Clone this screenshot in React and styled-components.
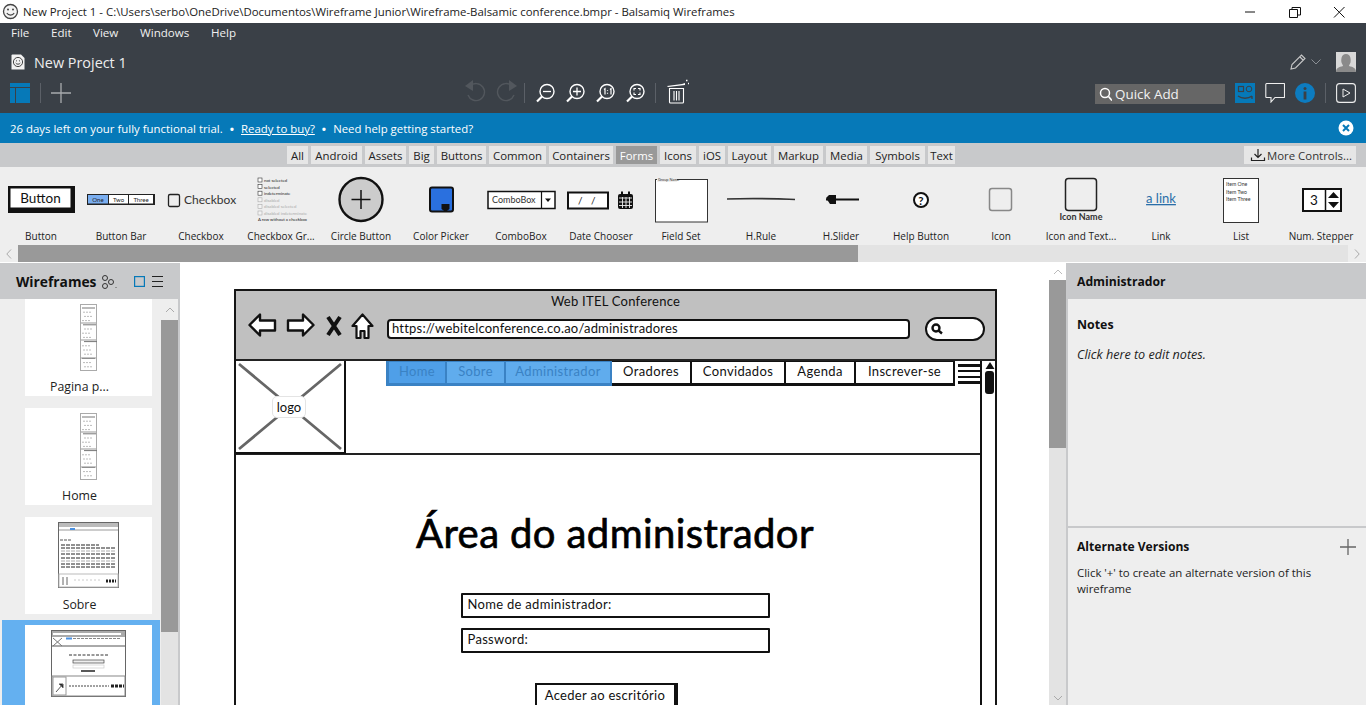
import React from 'react';
import styled, { createGlobalStyle } from 'styled-components';

const Global = createGlobalStyle`
  html, body { margin: 0; padding: 0; height: 705px; overflow: hidden; background: #fff; }
  body { font-family: "Open Sans", "Noto Sans", "Liberation Sans", sans-serif; font-size: 12px; color: #111; }
  * { box-sizing: border-box; }
`;
const sketch = `"Lato", "Inter", "Liberation Sans", sans-serif`;

const Page = styled.div`width:1366px;height:705px;display:flex;flex-direction:column;overflow:hidden;`;
const TitleBar = styled.div`height:23px;display:flex;align-items:center;padding-left:2px;background:#fff;flex:none;`;
const TitleText = styled.span`margin-left:4px;font-size:11.4px;color:#222;white-space:nowrap;`;
const WinControls = styled.div`margin-left:auto;display:flex;align-items:center;gap:29px;padding-right:18px;`;
const Dark = styled.div`background:#3a4047;color:#fff;height:90px;flex:none;display:flex;flex-direction:column;`;
const Menu = styled.div`height:19px;display:flex;align-items:center;padding-left:11px;font-size:11.6px;color:#f0f0f0;`;
const MenuItem = styled.span`width:${p=>p.$w}px;`;
const ProjectRow = styled.div`height:30px;display:flex;align-items:center;padding:0 10px 0 11px;margin-top:5px;`;
const ProjectName = styled.span`margin-left:9px;font-size:14.4px;color:#eee;`;
const RowRight = styled.div`margin-left:auto;display:flex;align-items:center;`;
const Avatar = styled.div`width:20px;height:20px;margin-left:15px;background:#d8d8d8;overflow:hidden;`;
const Toolbar = styled.div`height:20px;margin-top:6px;display:flex;align-items:center;padding:0 10px;`;
const Sep = styled.div`width:1px;height:20px;background:#5b6067;margin:0 ${p=>p.$r ?? 10}px 0 ${p=>p.$l ?? 10}px;`;
const ToolGroup = styled.div`display:flex;align-items:center;gap:${p=>p.$gap ?? 10}px;margin-left:${p=>p.$ml ?? 0}px;`;
const QuickAdd = styled.div`margin-left:auto;margin-top:2px;width:130px;height:20px;background:#666;display:flex;align-items:center;padding-left:4px;gap:3px;font-size:13.4px;color:#f2f2f2;margin-right:10px;`;
const Banner = styled.div`height:30px;flex:none;background:#0679b8;color:#fff;display:flex;align-items:center;padding:0 12px 0 10px;font-size:11.4px;`;
const BannerDot = styled.span`margin:0 7px;font-weight:700;`;
const BannerLink = styled.span`text-decoration:underline;`;
const TabsBar = styled.div`height:24px;flex:none;background:#c8c9cb;display:flex;align-items:center;padding-left:287px;`;
const Tab = styled.div`width:${p=>p.$w}px;height:18px;margin-right:3px;background:${p=>p.$on?'#999':'#e6e6e6'};color:${p=>p.$on?'#fff':'#222'};font-size:11.4px;display:flex;align-items:center;justify-content:center;white-space:nowrap;`;
const MoreBtn = styled.div`margin-left:auto;margin-right:10px;width:112px;height:18px;background:#e6e6e6;display:flex;align-items:center;gap:1px;padding-left:6px;font-size:11.4px;color:#333;white-space:nowrap;`;
const Palette = styled.div`height:78px;flex:none;background:#eee;display:grid;grid-template-columns:repeat(17,80px);padding-left:1px;`;
const Cell = styled.div`display:flex;flex-direction:column;align-items:center;`;
const CellLabel = styled.div`margin-top:1px;font-size:10px;line-height:14px;color:#222;white-space:nowrap;`;
const HScroll = styled.div`height:17px;flex:none;background:#e3e3e3;display:flex;align-items:center;`;
const HThumb = styled.div`width:840px;height:17px;background:#999;`;
const ArrowCell = styled.div`width:18px;height:17px;display:flex;align-items:center;justify-content:center;background:#eee;`;
const Main = styled.div`flex:1;display:flex;min-height:0;margin-top:1px;`;
const LeftPanel = styled.div`width:180px;flex:none;background:#eee;border-right:2px solid #c8c9cb;display:flex;flex-direction:column;`;
const PanelHead = styled.div`height:36px;flex:none;background:#c8c9cb;display:flex;align-items:center;padding:${p=>p.$pt ?? 0}px 0 0 ${p=>p.$pl}px;font-size:${p=>p.$fs}px;font-weight:700;color:#111;`;
const HeadIcons = styled.div`display:flex;align-items:center;`;
const ListWrap = styled.div`flex:1;display:flex;min-height:0;`;
const List = styled.div`width:161px;flex:none;overflow:hidden;`;
const Row = styled.div`padding:${p=>p.$sel?'5px 0 0 23px':'0 0 0 25px'};padding-bottom:${p=>p.$pb}px;background:${p=>p.$sel?'#64b0f0':'transparent'};margin-left:${p=>p.$sel?2:0}px;margin-right:${p=>p.$sel?1:0}px;height:${p=>p.$sel?'85px':'auto'};`;
const Card = styled.div`width:127px;height:97px;background:#fff;padding-top:5px;display:flex;flex-direction:column;align-items:center;`;
const CardImg = styled.div`height:67px;display:flex;justify-content:center;align-items:flex-start;`;
const CardName = styled.div`margin-top:7px;width:109px;margin-right:18px;text-align:center;font-size:12.3px;line-height:18px;color:#222;`;
const VScroll = styled.div`width:${p=>p.$w??17}px;flex:none;background:#e3e3e3;display:flex;flex-direction:column;position:relative;`;
const VBtn = styled.div`height:${p=>p.$h}px;flex:none;background:${p=>p.$bg||'#eee'};display:flex;align-items:center;justify-content:center;`;
const VThumb = styled.div`height:${p=>p.$h}px;flex:none;background:#999;`;
const VEnd = styled.div`margin-top:auto;height:15px;display:flex;align-items:center;justify-content:center;`;
const Canvas = styled.div`flex:1;min-width:0;background:#fff;overflow:hidden;padding:26px 0 0 54px;`;
const Frame = styled.div`width:763px;height:460px;border:2.5px solid #151515;border-bottom:none;border-radius:1px;background:#fff;`;
const Chrome = styled.div`height:70px;background:#c0c0c0;border-bottom:2px solid #222;display:flex;flex-direction:column;`;
const ChromeTitle = styled.div`height:20px;text-align:center;font-family:${sketch};font-size:13px;line-height:20px;color:#111;letter-spacing:.25px;`;
const ChromeNav = styled.div`display:flex;align-items:center;padding-left:12px;height:28px;margin-top:4px;`;
const UrlBox = styled.div`margin-left:13px;width:523px;height:20px;background:#fff;border:2.5px solid #111;border-radius:4px;padding-left:3px;font-family:${sketch};font-size:13px;line-height:15px;color:#111;letter-spacing:.2px;white-space:nowrap;`;
const SearchBox = styled.div`margin-left:15px;width:60px;height:24px;background:#fff;border:2.5px solid #111;border-radius:12px;display:flex;align-items:center;padding-left:3px;`;
const Body = styled.div`display:flex;height:100%;`;
const Content = styled.div`width:746px;flex:none;border-right:2.5px solid #111;display:flex;flex-direction:column;align-items:center;`;
const SiteHead = styled.div`width:100%;height:94px;flex:none;border-bottom:2px solid #222;display:flex;align-items:flex-start;`;
const LogoBox = styled.div`width:110px;height:93px;flex:none;border-right:2.5px solid #111;border-bottom:2px solid #111;position:relative;`;
const LogoPill = styled.div`position:absolute;left:36px;top:35px;width:34px;height:22px;background:#fff;border:1px solid #e4e4e4;border-radius:5px;display:flex;align-items:center;justify-content:center;font-family:${sketch};font-size:13px;color:#111;`;
const Nav = styled.div`margin-left:40px;height:25px;display:flex;`;
const NavItem = styled.div`width:${p=>p.$w}px;display:flex;align-items:center;justify-content:center;padding-bottom:3px;font-family:${sketch};font-size:13px;letter-spacing:.35px;white-space:nowrap;
  background:${p=>p.$bg||'#fff'};color:${p=>p.$bg?'#3a82c4':'#111'};
  border-right:2px solid ${p=>p.$bg?'#3a82c4':'#111'};border-bottom:3px solid ${p=>p.$bg?'#3a82c4':'#111'};border-top:1px solid ${p=>p.$bg?'#3a82c4':'#111'};
  ${p=>p.$first?`border-left:3px solid #3a82c4;`:''}`;
const Burger = styled.div`margin-left:3px;margin-top:3px;width:22px;height:20px;display:flex;flex-direction:column;justify-content:space-between;`;
const BurgerLine = styled.div`height:2.5px;background:#111;`;
const Heading = styled.h1`margin:54px 0 0 14px;font-family:${sketch};font-weight:400;font-size:40px;line-height:48px;color:#000;letter-spacing:.4px;white-space:nowrap;-webkit-text-stroke:.7px #000;`;
const Field = styled.div`width:309px;height:25px;margin:${p=>p.$mt}px 0 0 14px;border:2.5px solid #111;border-radius:1px;padding-left:5px;font-family:${sketch};font-size:13px;line-height:19px;color:#111;letter-spacing:.3px;`;
const Submit = styled.div`width:143px;height:30px;margin:30px 0 0 -4px;background:#fff;border:2px solid #111;border-right-width:4px;padding-top:2px;text-align:center;font-family:${sketch};font-size:13px;line-height:17px;color:#111;letter-spacing:.3px;white-space:nowrap;`;
const FrameScroll = styled.div`width:15px;flex:none;display:flex;flex-direction:column;align-items:center;`;
const FrameThumb = styled.div`width:9px;height:23px;margin-top:1px;background:#111;border-radius:3px;`;
const RightPanel = styled.div`flex:none;width:300px;background:#eee;border-left:2px solid #c8c9cb;display:flex;flex-direction:column;`;
const Notes = styled.div`height:229px;flex:none;padding:17px 9px 0;border-bottom:2px solid #c8c9cb;`;
const SubTitle = styled.div`font-size:${p=>p.$fs}px;font-weight:700;line-height:18px;color:#111;display:flex;align-items:center;justify-content:space-between;`;
const Italic = styled.div`margin-top:12px;font-size:12.6px;font-style:italic;line-height:18px;color:#222;`;
const Alt = styled.div`padding:10px 10px 0 9px;`;
const AltText = styled.div`margin-top:9px;font-size:11.4px;line-height:16px;color:#222;width:250px;`;

const I = ({w=20,h=20,children,style}) => <svg width={w} height={h} viewBox={`0 0 ${w} ${h}`} fill="none" style={{display:'block',flex:'none',...style}}>{children}</svg>;

const Zoom = ({children}) => <I><circle cx="12" cy="8.5" r="7" stroke="#fff" strokeWidth="1.4"/><path d="M7 13.5 2 18.5" stroke="#fff" strokeWidth="2.2"/>{children}</I>;

const tabs = [['All',21],['Android',51],['Assets',41],['Big',25],['Buttons',49],['Common',57],['Containers',64],['Forms',41,1],['Icons',36],['iOS',26],['Layout',43],['Markup',49],['Media',41],['Symbols',55],['Text',27]];

const PV = ({children}) => <svg width="80" height="61" viewBox="0 0 80 61" style={{display:'block',overflow:'visible'}} fontFamily={sketch}>{children}</svg>;

const previews = [
  ['Button', <PV><rect x="7" y="19" width="67" height="27" fill="#111"/><rect x="9.5" y="21.5" width="60" height="19" fill="#fff"/><text x="39.5" y="36" textAnchor="middle" fontSize="13.5" fill="#111">Button</text></PV>],
  ['Button Bar', <PV><rect x="6" y="27" width="68" height="11" fill="#222"/><rect x="7" y="28" width="20" height="8.5" fill="#7aaef0"/><rect x="28" y="28" width="19" height="8.5" fill="#fff"/><rect x="48" y="28" width="24" height="8.5" fill="#fff"/><g fontSize="6" textAnchor="middle" fill="#222"><text x="17" y="34.5">One</text><text x="37.5" y="34.5">Two</text><text x="60" y="34.5">Three</text></g></PV>],
  ['Checkbox', <PV><rect x="7.5" y="27.5" width="11" height="12" rx="1.5" fill="#eee" stroke="#222" strokeWidth="1.3"/><text x="23" y="37" fontSize="12" fill="#333">Checkbox</text></PV>],
  ['Checkbox Gr...', <PV>{['not selected','selected','indeterminate','disabled','disabled selected','disabled indeterminate'].map((t,i)=><g key={t} opacity={i>2?.35:1}><rect x="17" y={11+i*6.6} width="4" height="4" fill="#fff" stroke="#333" strokeWidth=".6"/><text x="23" y={15+i*6.6} fontSize="4.3" fill="#222">{t}</text></g>)}<text x="17" y="53.5" fontSize="4.3" fill="#222">A row without a checkbox</text></PV>],
  ['Circle Button', <PV><circle cx="40" cy="32.5" r="21.5" fill="#ccc" stroke="#111" strokeWidth="2.4"/><path d="M30.5 32.5h19M40 23v19" stroke="#111" strokeWidth="1.5"/></PV>],
  ['Color Picker', <PV><rect x="29" y="20.5" width="23" height="24" rx="2" fill="#2a70df" stroke="#111" strokeWidth="2"/><path d="M40.500 37h8v5l-4 3-4-3z" fill="#111"/></PV>],
  ['ComboBox', <PV><rect x="7" y="24.500" width="67" height="17" fill="#fff" stroke="#111" strokeWidth="1.5"/><path d="M60.500 24.500v17" stroke="#111" strokeWidth="1.2"/><path d="M64 31.500h6l-3 3.500z" fill="#111"/><text x="11" y="36" fontSize="9" fill="#333">ComboBox</text></PV>],
  ['Date Chooser', <PV><rect x="7" y="25.500" width="40" height="16" fill="#fff" stroke="#111" strokeWidth="2"/><text x="17" y="37" fontSize="10" fill="#222" letterSpacing="3">/ /</text><rect x="57" y="27" width="15" height="15" rx="2" fill="#111"/><path d="M61 24.500v3M68 24.500v3" stroke="#111" strokeWidth="2"/><path d="M58 31h13M58 35h13M58 38.500h13M61.500 30v11M65 30v11M68.500 30v11" stroke="#eee" strokeWidth=".9"/></PV>],
  ['Field Set', <PV><rect x="14.500" y="12.500" width="52" height="42.500" fill="#fff" stroke="#333"/><rect x="16" y="10" width="20" height="5" fill="#eee"/><text x="17" y="14" fontSize="3.800" fill="#333">Group Name</text></PV>],
  ['H.Rule', <PV><path d="M6 32c20-1 45-.6 68 .5" stroke="#333" strokeWidth="1.5"/></PV>],
  ['H.Slider', <PV><path d="M25 32.500h33" stroke="#111" strokeWidth="2"/><path d="M25 31l3-3h7v9h-6z" fill="#111"/></PV>],
  ['Help Button', <PV><circle cx="40" cy="33" r="7" fill="#fff" stroke="#111" strokeWidth="2"/><text x="40" y="37.500" textAnchor="middle" fontSize="11.500" fontWeight="700" fill="#111">?</text></PV>],
  ['Icon', <PV><rect x="28.500" y="21.500" width="22" height="22" rx="2.500" fill="#eee" stroke="#888" strokeWidth="1.500"/></PV>],
  ['Icon and Text...', <PV><rect x="24.500" y="11.500" width="31" height="32" rx="3" fill="#eee" stroke="#222" strokeWidth="1.500"/><text x="40" y="53" textAnchor="middle" fontSize="9" fontWeight="700" fill="#333">Icon Name</text></PV>],
  ['Link', <PV><text x="40" y="36" textAnchor="middle" fontSize="13" fill="#2a6ea8" textDecoration="underline">a link</text></PV>],
  ['List', <PV><rect x="22.500" y="11.500" width="35" height="44" fill="#fff" stroke="#333"/><g fontSize="5.200" fill="#333"><text x="25" y="19">Item One</text><text x="25" y="26.500">Item Two</text><text x="25" y="34">Item Three</text></g></PV>],
  ['Num. Stepper', <PV><rect x="22" y="22" width="38" height="22" fill="#fff" stroke="#111" strokeWidth="2"/><path d="M44.500 22v22" stroke="#111" strokeWidth="1.500"/><text x="33" y="38" textAnchor="middle" fontSize="13.500" fill="#111">3</text><path d="M47 31l5.500-6 5.500 6zM47 35l5.500 6 5.500-6z" fill="#111"/></PV>],
];

const seq = (n, fn) => Array.from({length:n}, (_, i) => fn(i));

const NarrowThumb = () => <svg width="17" height="67" style={{display:'block'}}><rect x=".5" y=".5" width="16" height="66" fill="#fff" stroke="#aaa"/>{seq(15, i => <path key={i} d={`M${2+i%3} ${4+i*4.200}h${i%4===0?13:8}`} stroke={i%4===0?'#777':'#bbb'} strokeDasharray={i%4===0?'':'2 1'}/>)}<path d="M1 19h15M1 36h15M1 54h15" stroke="#999"/></svg>;
const SobreThumb = () => <svg width="61" height="66" style={{display:'block'}}><rect x=".5" y=".5" width="60" height="65" fill="#fff" stroke="#666"/><rect x="1" y="1" width="59" height="4" fill="#bbb"/><path d="M1 8h59" stroke="#999"/><path d="M12 7h5" stroke="#4a90e0" strokeWidth="2"/><path d="M2 18h12" stroke="#555" strokeDasharray="3 1"/>{[23,26,29,32,36,39,42,45].map((y,i)=><path key={y} d={`M3 ${y}h${i===0?38:54}`} stroke={i%3===2?'#aaa':'#222'} strokeDasharray="4 1"/>)}<rect x="1" y="52" width="59" height="13" fill="#fff" stroke="#bbb"/><path d="M5 55v8M9 55v8" stroke="#666"/><path d="M16 58h28" stroke="#ccc" strokeDasharray="2 2"/><path d="M48 59h10" stroke="#222" strokeWidth="3" strokeDasharray="2 1"/></svg>;
const AdminThumb = () => <svg width="75" height="67" style={{display:'block'}}><rect x=".5" y=".5" width="74" height="66" fill="#fff" stroke="#666"/><rect x="1" y="1" width="73" height="6" fill="#aaa"/><path d="M2 4h68" stroke="#fff" strokeWidth="2"/><path d="M15 8.500h6" stroke="#4a90e0" strokeWidth="2"/><path d="M22 8.500h48" stroke="#888" strokeDasharray="3 1"/><path d="M1 16h73" stroke="#555"/><path d="M2 8l9 8M11 8l-9 8" stroke="#777"/><path d="M18 25h39" stroke="#333" strokeDasharray="3 1.500"/><rect x="22" y="30" width="31" height="3" fill="#eee" stroke="#444" strokeWidth=".7"/><rect x="22" y="35" width="31" height="3" fill="#fff" stroke="#ccc" strokeWidth=".7"/><path d="M30 41h14" stroke="#222" strokeWidth="1.500"/><rect x="1" y="46" width="73" height="20" fill="#fff" stroke="#888"/><rect x="2" y="47" width="13" height="18" fill="#fff" stroke="#999"/><path d="M5 62l7-8M8 54h4v4" stroke="#555"/><path d="M18 56h40" stroke="#444" strokeDasharray="2 1"/><path d="M60 56h13" stroke="#222" strokeWidth="3" strokeDasharray="3 1"/></svg>;

export default function App() {
  return (
    <Page>
      <Global />
      <TitleBar>
        <I w={17} h={17}><circle cx="8.500" cy="8.500" r="7" stroke="#444" strokeWidth="1.300" fill="#f4f4f4"/><circle cx="6" cy="6.500" r="1" fill="#444"/><circle cx="11" cy="6.500" r="1" fill="#444"/><path d="M4.800 10c1.600 2.800 6 2.800 7.400 0" stroke="#444" strokeWidth="1.100"/></I>
        <TitleText>New Project 1 - C:\Users\serbo\OneDrive\Documentos\Wireframe Junior\Wireframe-Balsamic conference.bmpr - Balsamiq Wireframes</TitleText>
        <WinControls>
          <I w={16} h={12}><path d="M3 6h10" stroke="#111"/></I>
          <I w={16} h={12}><path d="M2.500 3.500h8v8h-8zM5 3V1.500h8.500V9H11" stroke="#111"/></I>
          <I w={16} h={12}><path d="M2 1l10.500 10.500M12.500 1 2 11.500" stroke="#111"/></I>
        </WinControls>
      </TitleBar>
      <Dark>
        <Menu>
          <MenuItem $w={40}>File</MenuItem><MenuItem $w={42}>Edit</MenuItem><MenuItem $w={47}>View</MenuItem><MenuItem $w={71}>Windows</MenuItem><MenuItem $w={40}>Help</MenuItem>
        </Menu>
        <ProjectRow>
          <I w={14} h={16}><path d="M.5 1.500Q.5.500 1.500.500H10l3.500 3.500V15.500H.5z" fill="#f2f2f2"/><circle cx="7" cy="8" r="4.600" stroke="#444" strokeWidth="1"/><path d="M4.700 9c1 1.600 3.600 1.600 4.600 0" stroke="#444"/><circle cx="5.500" cy="6.800" r=".6" fill="#444"/><circle cx="8.500" cy="6.800" r=".6" fill="#444"/></I>
          <ProjectName>New Project 1</ProjectName>
          <RowRight>
            <I w={16} h={16}><path d="M1 15l1-4.500L11.500 1l3.500 3.500L5.500 14z M10 3l3.500 3.500" stroke="#c8c8c8" strokeWidth="1.100"/></I>
            <I w={10} h={6} style={{marginLeft:5}}><path d="M.5.500 5 5 9.500.5" stroke="#8a8f95"/></I>
            <Avatar><I><path d="M0 20c0-4 3-5 7-6 0-1-1-2-1.500-3.500C5 8 5 2 10 2s5 6 4.500 8.500C14 12 13 13 13 14c4 1 7 2 7 6z" fill="#8a8a8a"/></I></Avatar>
          </RowRight>
        </ProjectRow>
        <Toolbar>
          <I><path d="M0 0h20v20H0z" fill="#0679b8"/><path d="M0 4.500h20M5.500 4.500V20" stroke="#3a4047"/></I>
          <Sep />
          <I><path d="M0 10h20M10 0v20" stroke="#a8abae" strokeWidth="1.300"/></I>
          <ToolGroup $ml={393} $gap={10}>
            <I w={22} h={24} style={{marginTop:-2}}><path d="M6 6a8.500 8.500 0 1 1-2 9" stroke="#52575d" strokeWidth="1.400"/><path d="M1 6l8-6v11z" fill="#52575d"/></I>
            <I w={22} h={24} style={{marginTop:-2}}><path d="M16 6a8.500 8.500 0 1 0 2 9" stroke="#52575d" strokeWidth="1.400"/><path d="M21 6l-8-6v11z" fill="#52575d"/></I>
          </ToolGroup>
          <Sep $l={6} $r={10} />
          <ToolGroup>
            <Zoom><path d="M8 8.500h8" stroke="#fff" strokeWidth="1.300"/></Zoom>
            <Zoom><path d="M8 8.500h8M12 4.500v8" stroke="#fff" strokeWidth="1.300"/></Zoom>
            <Zoom><path d="M9 6.500l1-.8v5.800M15 6.500l1-.8v5.800M12.500 7.200v.9M12.500 9.800v.9" stroke="#fff" strokeWidth="1.200"/></Zoom>
            <Zoom><path d="M9 7.500V5.500h2M13 5.500h2v2M15 9.500v2h-2M11 11.500H9v-2" stroke="#fff" strokeWidth="1.100"/></Zoom>
          </ToolGroup>
          <Sep $l={10} $r={10} />
          <I w={24} h={26} style={{marginTop:-5}}><path d="M1 8l15-2 3-1v2l-17 2z" fill="#fff"/><path d="M20 2.500h1.500M22 5.500h1" stroke="#fff" strokeWidth="1.500"/><path d="M3.500 10.500h14V24a1 1 0 0 1-1 1h-12a1 1 0 0 1-1-1zM8 13v9.500M10.500 13v9.500M13 13v9.500" stroke="#fff" strokeWidth="1.100"/></I>
          <QuickAdd>
            <I w={13} h={14}><circle cx="6" cy="6" r="4.500" stroke="#fff" strokeWidth="1.500"/><path d="M9.500 9.500l3.500 4" stroke="#fff" strokeWidth="1.700"/></I>
            Quick Add
          </QuickAdd>
          <ToolGroup>
            <I><path d="M0 0h20v20H0z" fill="#0679b8"/><rect x="3.500" y="3.500" width="5" height="5" stroke="#3a4047" strokeWidth="1.200"/><circle cx="14" cy="6" r="2.800" stroke="#3a4047"/><path d="M3 13c4 3 10 3 14 0M17 13v3" stroke="#3a4047" strokeWidth="1.300"/></I>
            <I><path d="M.8 1.500a1 1 0 0 1 1-1H19a.5.500 0 0 1 .5.500v13a.5.500 0 0 1-.5.500H10L6 19v-4.500H1.500a.7.700 0 0 1-.7-.7z" stroke="#eee" strokeWidth="1.100"/></I>
            <I><circle cx="10" cy="10" r="10" fill="#0d7cc0"/><circle cx="10" cy="5.500" r="1.500" fill="#3a4047"/><path d="M10 8.500v8" stroke="#3a4047" strokeWidth="2.800"/></I>
          </ToolGroup>
          <Sep $l={10} $r={10} />
          <I><rect x=".6" y=".6" width="18.800" height="18.800" rx="3" stroke="#eee" strokeWidth="1.100"/><path d="M7 6l7 4-7 4z" stroke="#eee"/></I>
        </Toolbar>
      </Dark>
      <Banner>
        26 days left on your fully functional trial.<BannerDot>•</BannerDot><BannerLink>Ready to buy?</BannerLink><BannerDot>•</BannerDot>Need help getting started?
        <RowRight>
          <I w={16} h={16}><circle cx="8" cy="8" r="7.500" fill="#fff"/><path d="M5 5l6 6M11 5l-6 6" stroke="#0679b8" strokeWidth="2"/></I>
        </RowRight>
      </Banner>
      <TabsBar>
        {tabs.map(([t,w,on]) => <Tab key={t} $w={w} $on={on}>{t}</Tab>)}
        <MoreBtn>
          <I w={16} h={14}><path d="M8 1v8M4.500 6 8 9.500 11.500 6M1.500 9.500v3h13v-3" stroke="#222" strokeWidth="1.200"/></I>
          More Controls...
        </MoreBtn>
      </TabsBar>
      <Palette>
        {previews.map(([name, node]) => <Cell key={name}>{node}<CellLabel>{name}</CellLabel></Cell>)}
      </Palette>
      <HScroll>
        <ArrowCell><I w={6} h={10}><path d="M5 .5.800 5 5 9.500" stroke="#aaa"/></I></ArrowCell>
        <HThumb />
        <RowRight><ArrowCell><I w={6} h={10}><path d="M1 .5 5.200 5 1 9.500" stroke="#aaa"/></I></ArrowCell></RowRight>
      </HScroll>
      <Main>
        <LeftPanel>
          <PanelHead $pl={16} $pt={1} $fs={13.8}>
            Wireframes
            <HeadIcons>
              <I w={17} h={14} style={{marginLeft:5}}><circle cx="4" cy="3" r="2.500" stroke="#333"/><circle cx="4" cy="11" r="2.500" stroke="#333"/><circle cx="10" cy="7" r="2.500" stroke="#333"/><path d="M14 12l1 1 1-1" stroke="#777" strokeWidth=".7"/></I>
              <I w={11} h={11} style={{marginLeft:16}}><rect x=".6" y=".6" width="9.800" height="9.800" stroke="#0679b8" strokeWidth="1.200"/></I>
              <I w={11} h={11} style={{marginLeft:7}}><path d="M0 .5h11M0 5.500h11M0 10.500h11" stroke="#222"/></I>
            </HeadIcons>
          </PanelHead>
          <ListWrap>
            <List>
              <Row $pb={12}><Card><CardImg><NarrowThumb /></CardImg><CardName>Pagina p...</CardName></Card></Row>
              <Row $pb={12}><Card><CardImg><NarrowThumb /></CardImg><CardName>Home</CardName></Card></Row>
              <Row $pb={6}><Card><CardImg><SobreThumb /></CardImg><CardName>Sobre</CardName></Card></Row>
              <Row $sel $pb={0}><Card><CardImg><AdminThumb /></CardImg></Card></Row>
            </List>
            <VScroll>
              <VBtn $h={21}><I w={10} h={6}><path d="M1 5 5 1l4 4" stroke="#aaa"/></I></VBtn>
              <VThumb $h={312} />
            </VScroll>
          </ListWrap>
        </LeftPanel>
        <Canvas>
          <Frame>
            <Chrome>
              <ChromeTitle>Web ITEL Conference</ChromeTitle>
              <ChromeNav>
                <I w={29} h={26} style={{marginTop:-6}}><path d="M1.500 13 12 2.500v6h15v10H12v5z" transform="translate(0 -1)" fill="#fff" stroke="#111" strokeWidth="2.400" strokeLinejoin="round"/></I>
                <I w={29} h={26} style={{marginLeft:9,marginTop:-6}}><path d="M27.500 13 17 2.500v6H2v10h15v5z" transform="translate(0 -1)" fill="#fff" stroke="#111" strokeWidth="2.400" strokeLinejoin="round"/></I>
                <I w={16} h={22} style={{marginLeft:11,marginTop:-6}}><path d="M2 2l12 18M14 2 2 20" stroke="#111" strokeWidth="4"/></I>
                <I w={23} h={27} style={{marginLeft:9,marginTop:-6}}><path d="M11.500 1.500 1.500 13h4v12h4v-7h4v7h4V13h4z" fill="#fff" stroke="#111" strokeWidth="2.200" strokeLinejoin="round"/></I>
                <UrlBox>https://webitelconference.co.ao/administradores</UrlBox>
                <SearchBox><I w={14} h={14}><circle cx="6" cy="6" r="3.500" stroke="#111" strokeWidth="2.400"/><path d="M8.500 8.500l3.500 3" stroke="#111" strokeWidth="2.400"/></I></SearchBox>
              </ChromeNav>
            </Chrome>
            <Body>
              <Content>
                <SiteHead>
                  <LogoBox>
                    <svg width="108" height="91" style={{display:'block'}}><path d="M3 3l102 85M105 3 3 88" stroke="#666" strokeWidth="2.800"/></svg>
                    <LogoPill>logo</LogoPill>
                  </LogoBox>
                  <Nav>
                    <NavItem $w={61} $bg="#4f9fe8" $first>Home</NavItem>
                    <NavItem $w={59} $bg="#60aced">Sobre</NavItem>
                    <NavItem $w={106} $bg="#60aced">Administrador</NavItem>
                    <NavItem $w={80}>Oradores</NavItem>
                    <NavItem $w={94}>Convidados</NavItem>
                    <NavItem $w={70}>Agenda</NavItem>
                    <NavItem $w={99}>Inscrever-se</NavItem>
                  </Nav>
                  <Burger><BurgerLine /><BurgerLine /><BurgerLine /><BurgerLine /></Burger>
                </SiteHead>
                <Heading>Área do administrador</Heading>
                <Field $mt={36}>Nome de administrador:</Field>
                <Field $mt={10}>Password:</Field>
                <Submit>Aceder ao escritório</Submit>
              </Content>
              <FrameScroll>
                <I w={10} h={9}><path d="M5 1l4.500 7h-9z" fill="#111"/></I>
                <FrameThumb />
              </FrameScroll>
            </Body>
          </Frame>
        </Canvas>
        <VScroll>
          <VBtn $h={17} $bg="#fff"><I w={10} h={6}><path d="M1 5 5 1l4 4" stroke="#bbb"/></I></VBtn>
          <VThumb $h={168} />
          <VEnd><I w={10} h={6}><path d="M1 1l4 4 4-4" stroke="#aaa"/></I></VEnd>
        </VScroll>
        <RightPanel>
          <PanelHead $pl={9} $fs={12.2}>Administrador</PanelHead>
          <Notes>
            <SubTitle $fs={12.4}>Notes</SubTitle>
            <Italic>Click here to edit notes.</Italic>
          </Notes>
          <Alt>
            <SubTitle $fs={12.1}>Alternate Versions<I w={16} h={16}><path d="M0 8h16M8 0v16" stroke="#666" strokeWidth="1.300"/></I></SubTitle>
            <AltText>Click '+' to create an alternate version of this wireframe</AltText>
          </Alt>
        </RightPanel>
      </Main>
    </Page>
  );
}
